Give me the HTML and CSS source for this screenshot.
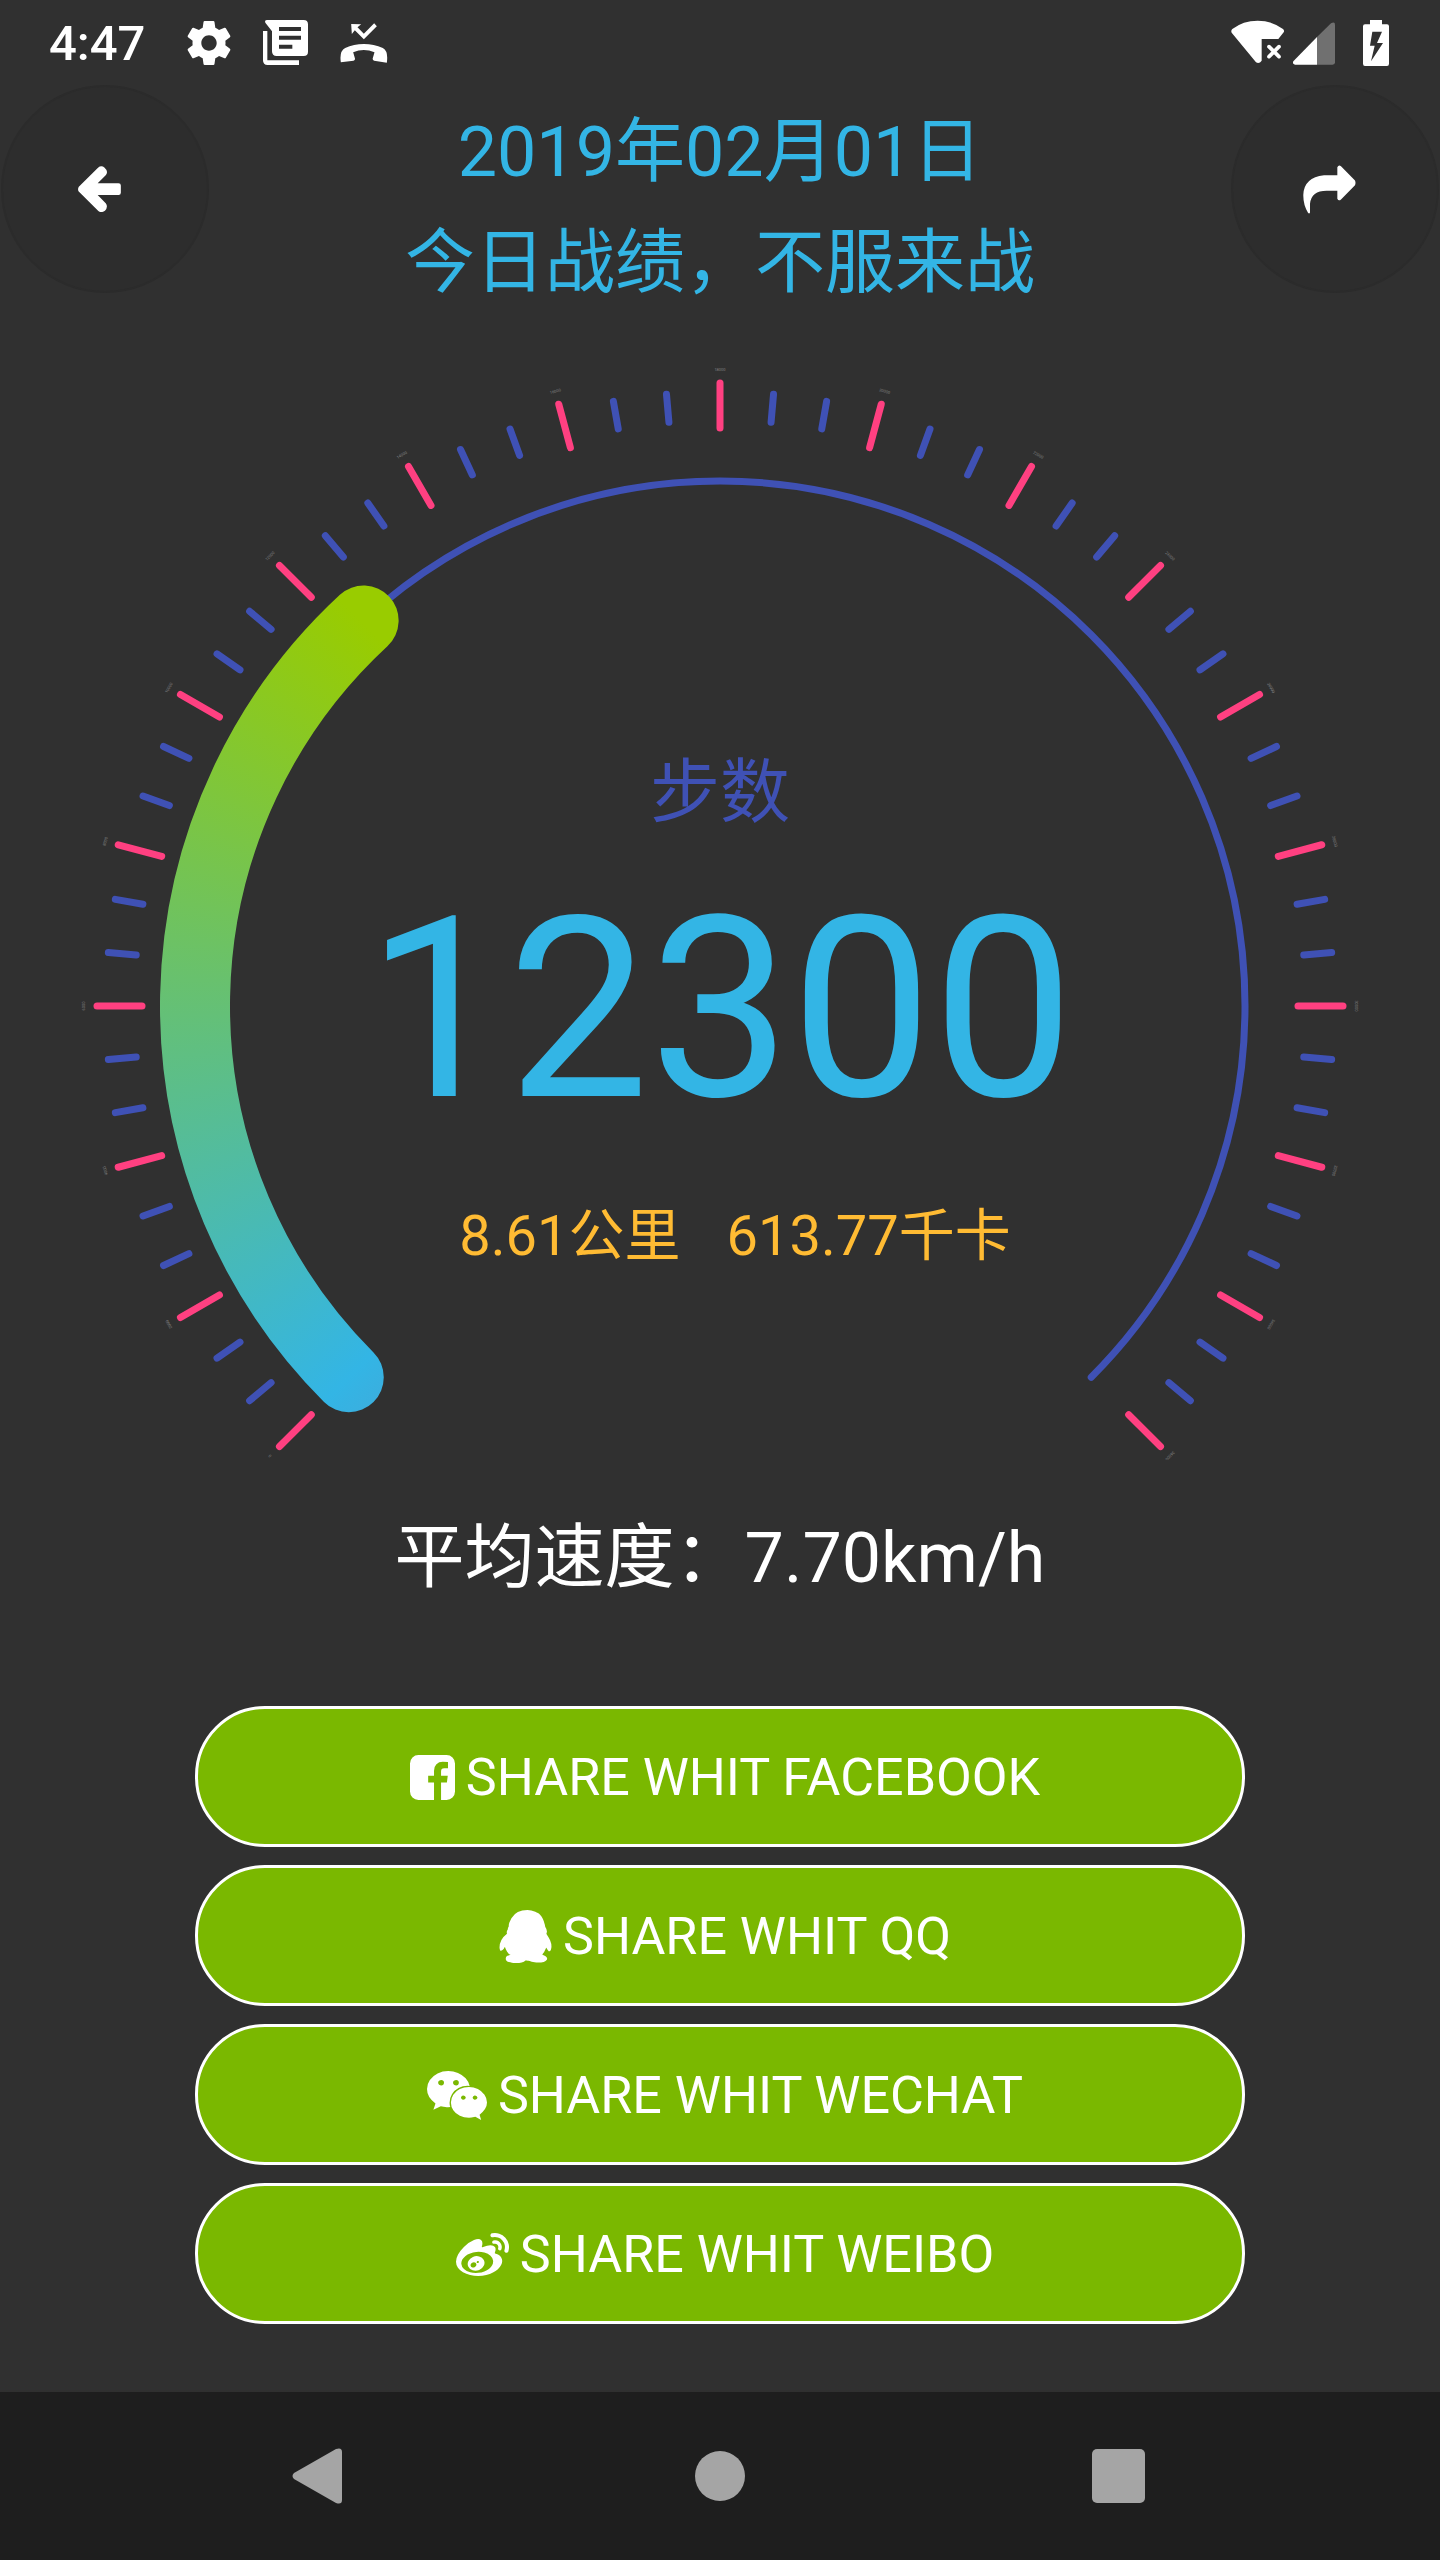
FILE: index.html
```html
<!DOCTYPE html>
<html lang="zh-CN">
<head>
<meta charset="utf-8">
<meta name="viewport" content="width=device-width, initial-scale=1">
<title>今日战绩</title>
<link rel="stylesheet" href="styles.css">
</head>
<body>
<div class="screen">
  <div class="status-bar">
    <div class="status-group status-left">
      <span class="clock">4:47</span>
      <svg class="icon-settings" viewBox="2 2 20 20" width="44" height="44"><path d="M19.43 12.98c.04-.32.07-.64.07-.98s-.03-.66-.07-.98l2.11-1.65c.19-.15.24-.42.12-.64l-2-3.46c-.12-.22-.39-.3-.61-.22l-2.49 1c-.52-.4-1.08-.73-1.69-.98l-.38-2.65C14.46 2.18 14.25 2 14 2h-4c-.25 0-.46.18-.49.42l-.38 2.65c-.61.25-1.17.59-1.69.98l-2.49-1c-.23-.09-.49 0-.61.22l-2 3.46c-.13.22-.07.49.12.64l2.11 1.65c-.04.32-.07.65-.07.98s.03.66.07.98l-2.11 1.65c-.19.15-.24.42-.12.64l2 3.46c.12.22.39.3.61.22l2.49-1c.52.4 1.08.73 1.69.98l.38 2.65c.03.24.24.42.49.42h4c.25 0 .46-.18.49-.42l.38-2.65c.61-.25 1.17-.59 1.69-.98l2.49 1c.23.09.49 0 .61-.22l2-3.46c.12-.22.07-.49-.12-.64l-2.11-1.65zM12 15.5c-1.93 0-3.5-1.57-3.5-3.5s1.57-3.5 3.5-3.5 3.5 1.57 3.5 3.5-1.57 3.5-3.5 3.5z"/></svg>
      <svg viewBox="792 60 135 135" width="45" height="45"><path fill-rule="evenodd" d="M804 60H914Q927 60 927 73V155Q927 168 914 168H833Q819 168 819 154V94L799 68Q796 60 804 60ZM840 81V93H906V81ZM840 107V119H906V107ZM840 134V146H880V134Z"/><path d="M792 93H805V181H900V195H806Q792 195 792 181Z"/></svg>
      <svg viewBox="1019 57 143 138" width="48" height="46"><path d="M1052 69L1082 70L1071 79L1090 98L1121 67L1129 76L1090 115L1063 88L1054 99Z"/><path d="M1021 184Q1016 150 1034 141Q1060 129 1090 129Q1120 129 1147 141Q1164 150 1159 185L1121 179Q1115 178 1117 171L1122 154Q1106 147 1090 147Q1074 147 1058 154L1063 171Q1065 178 1059 179Z"/></svg>
    </div>
    <div class="status-group status-right">
      <svg viewBox="216 58 162 138" width="54" height="46"><path d="M218 96Q215 90 220 85Q252 60 296 60Q338 60 372 85Q377 90 374 95L358 115H308V180Q301 190 291 185Z"/><path d="M330 138L360 168M360 138L330 168" fill="none" stroke="#fff" stroke-width="11" stroke-linecap="round"/></svg>
      <svg class="icon-signal" viewBox="402 58 126 138" width="42" height="46"><path d="M474 109L516 68Q528 62 528 72V185Q528 192 521 192H474Z" fill="#707070"/><path d="M474 109V192H408Q399 190 403 182Z"/></svg>
      <svg viewBox="609 57 78 138" width="26" height="46"><path fill-rule="evenodd" d="M630 57H666V70H681Q687 70 687 76V188Q687 195 681 195H615Q609 195 609 188V76Q609 70 615 70H630ZM637 92L630 134H644L633 181L669 126H651L666 92Z"/></svg>
    </div>
  </div>

  <header class="header">
    <button class="round-button" type="button" aria-label="返回">
      <svg viewBox="234 500 129 139" width="43" height="46"><path d="M235 576Q232 569 236 563L294 505Q304 496 314 505Q326 516 318 527L293 552H356Q363 552 363 559V581Q363 588 356 588H293L318 613Q325 625 315 635Q305 643 295 636Z"/></svg>
    </button>
    <h1 class="title">2019年02月01日<br>今日战绩，不服来战</h1>
    <button class="round-button" type="button" aria-label="分享">
      <svg viewBox="425 488 159 146" width="53" height="49"><path d="M528 518V494Q532 486 539 491L581 534Q584 541 581 548L539 591Q532 597 528 589V565H496Q450 565 446 604V630Q444 635 440 631Q425 605 426 576Q428 525 488 518Z"/></svg>
    </button>
  </header>

  <main class="content">
    <section class="gauge">
      <svg class="dial" viewBox="0 0 1440 1141" aria-hidden="true">
        <defs>
          <mask id="progress-mask" maskUnits="userSpaceOnUse" x="0" y="0" width="1440" height="1141">
            <path id="progress-arc" fill="none" stroke="#fff" stroke-width="70" stroke-linecap="round"/>
          </mask>
        </defs>
        <path id="track" fill="none" stroke="#3f51b5" stroke-width="7" stroke-linecap="round"/>
        <g id="ticks"></g>
        <g mask="url(#progress-mask)">
          <foreignObject x="120" y="87" width="1200" height="1200"><div class="progress-fill"></div></foreignObject>
        </g>
      </svg>
      <div class="readout">
        <p class="steps-label">步数</p>
        <p class="steps-value">12300</p>
        <p class="totals"><span>8.61公里</span><span>613.77千卡</span></p>
      </div>
    </section>

    <p class="speed">平均速度：7.70km/h</p>

    <div class="share-list">
      <button class="share-button" type="button">
        <svg viewBox="128 0 1536 1792" width="45" height="53"><path d="M1376 128q119 0 203.5 84.5t84.5 203.5v960q0 119-84.5 203.5t-203.5 84.5h-188v-595h199l30-232h-229v-148q0-56 23.5-84t91.5-28l122-1v-207q-63-9-178-9-136 0-217.5 80t-81.5 226v171h-200v232h200v595h-532q-119 0-203.5-84.5t-84.5-203.5v-960q0-119 84.5-203.5t203.5-84.5h960z"/></svg>
        <span>SHARE WHIT FACEBOOK</span>
      </button>
      <button class="share-button" type="button">
        <svg viewBox="0 0 1792 1792" width="53" height="53"><path d="M270 806q-8-19-8-52 0-20 11-49t24-45q-1-22 7.5-53t22.5-43q0-139 92.5-288.5t217.5-209.5q139-66 324-66 133 0 266 55 49 21 90 48t71 56 55 68 42 74 32.5 84.5 25.5 89.5 22 98l1 5q55 83 55 150 0 14-9 40t-9 38q0 1 1.500 3.500t3.500 5 2 3.500q77 114 120.500 214.500t43.500 208.500q0 43-19.500 100t-55.500 57q-9 0-19.500-7.500t-19-17.500-19-26-16-26.500-13.500-26-9-17.500q-1-1-3-1l-5 4q-59 154-132 223 20 20 61.500 38.500t69 41.500 35.500 65q-2 4-4 16t-7 18q-64 97-302 97-53 0-110.500-9t-98-20-104.500-30q-15-5-23-7-14-4-46-4.500t-40-1.500q-41 45-127.500 65t-168.500 20q-35 0-69-1.500t-93-9-101-20.500-74.500-40-32.500-64q0-40 10-59.500t41-48.500q11-2 40.500-13t49.500-12q4 0 14-2 2-2 2-4l-2-3q-48-11-108-105.500t-73-156.500l-5-3q-4 0-12 20-18 41-54.500 74.500t-77.500 37.500h-1q-4 0-6-4.500t-5-5.500q-23-54-23-100 0-275 252-466z"/></svg>
        <span>SHARE WHIT QQ</span>
      </button>
      <button class="share-button" type="button">
        <svg viewBox="0 0 2048 1792" width="60" height="53"><path d="M580 461q0-41-25-66t-66-25q-43 0-76 25.500t-33 65.500q0 39 33 64.500t76 25.500q41 0 66-24.500t25-65.500zm743 507q0-28-25.500-50t-65.500-22q-27 0-49.500 22.500t-22.500 49.500q0 28 22.500 50.500t49.500 22.500q40 0 65.500-22t25.500-51zm-236-507q0-41-24.500-66t-65.500-25q-43 0-76 25.500t-33 65.500q0 39 33 64.500t76 25.500q41 0 65.500-24.500t24.500-65.500zm635 507q0-28-26-50t-65-22q-27 0-49.500 22.500t-22.500 49.500q0 28 22.500 50.500t49.500 22.500q39 0 65-22t26-51zm-266-397q-31-4-70-4-169 0-311 77t-223.500 208.500-81.500 287.500q0 78 23 152-35 3-68 3-26 0-50-1.500t-55-6.500-44.500-7-54.500-10.500-50-10.500l-253 127 72-218q-290-203-290-490 0-169 97.500-311t264-223.500 363.500-81.500q176 0 332.500 66t262 182.500 136.500 260.500zm592 561q0 117-68.500 223.500t-185.500 193.500l55 181-199-109q-150 37-218 37-169 0-311-70.500t-223.500-191.500-81.500-264 81.500-264 223.500-191.500 311-70.500q161 0 303 70.500t227.500 192 85.500 263.500z"/></svg>
        <span>SHARE WHIT WECHAT</span>
      </button>
      <button class="share-button" type="button">
        <svg viewBox="0 0 1792 1792" width="53" height="53"><path d="M675 1284q21-34 11-69t-45-50q-34-14-73-1t-60 46q-22 34-13 68.500t43 50.500 74.500 2.500 62.500-47.500zm94-121q8-13 3.500-26.500t-17.500-18.500q-14-5-28.500.5t-21.500 18.500q-17 31 13 45 14 5 29-.5t22-18.500zm174 107q-45 102-158 150t-224 12q-107-34-147.500-126.500t6.500-187.500q47-93 151.500-139t210.500-19q111 29 158.500 119.500t2.500 190.500zm312-160q-9-96-89-170t-208.500-109-274.500-21q-223 23-369.500 141.500t-132.500 264.500q9 96 89 170t208.500 109 274.500 21q223-23 369.500-141.500t132.500-264.500zm308 4q0 68-37 139.500t-109 137-168.500 117.500-226 83-270.500 31-275-33.500-240.500-93-171.500-151-65-199.500q0-115 69.500-245t197.500-258q169-169 341.500-236t246.500 7q65 64 20 209-4 14-1 20t10 7 14.500-.5 13.500-3.500l6-2q139-59 246-59t153 61q45 63 0 178-2 13-4.500 20t4.500 12.500 12 7 17 6.500q57 18 103 47t80 81.500 34 116.500zm-74-624q42 47 54.500 108.500t-6.500 117.500q-8 23-29.500 34t-44.500 4q-23-8-34-29.500t-4-44.500q20-63-24-111t-107-35q-24 5-45-8t-25-37q-5-24 8-44.500t37-25.500q60-13 119 5.500t101 65.500zm181-163q87 96 112.500 222.500t-13.500 241.500q-9 27-34 40t-52 4-40-34-5-52q28-82 10-172t-80-158q-62-69-148-95.500t-173-8.500q-28 6-52-9.500t-30-43.500 9.500-51.500 43.500-29.500q123-26 244 11.500t208 134.500z"/></svg>
        <span>SHARE WHIT WEIBO</span>
      </button>
    </div>
  </main>

  <nav class="nav-bar" aria-label="系统导航">
    <button class="nav-button" type="button" aria-label="返回"><svg viewBox="0 0 56 58" width="56" height="58"><path d="M2 32Q-1 29 2 26L44 2Q50 0 50 5V53Q50 58 44 56Z"/></svg></button>
    <button class="nav-button" type="button" aria-label="主屏幕"><svg viewBox="0 0 50 50" width="50" height="50"><circle cx="25" cy="25" r="25"/></svg></button>
    <button class="nav-button" type="button" aria-label="最近任务"><svg viewBox="0 0 56 54" width="56" height="54"><rect width="53" height="54" rx="5"/></svg></button>
  </nav>
</div>
<script src="gauge.js"></script>
</body>
</html>
```

FILE: styles.css
```css
* {
  box-sizing: border-box;
}

body {
  margin: 0;
  background: #303030;
  color: #fff;
  font-family: Roboto, "Noto Sans CJK SC", sans-serif;
}

h1,
p {
  margin: 0;
  font-weight: 400;
}

button {
  padding: 0;
  border: 0;
  background: none;
  color: inherit;
  font: inherit;
  cursor: pointer;
}

svg {
  display: block;
  fill: currentColor;
}

.screen {
  display: flex;
  flex-direction: column;
  min-height: 100vh;
}

/* Status bar */

.status-bar {
  display: flex;
  justify-content: space-between;
  align-items: center;
  height: 85px;
  padding: 0 51px 0 49px;
}

.status-group {
  display: flex;
  align-items: center;
}

.status-left {
  gap: 32px;
}

.status-right {
  gap: 8px;
}

.clock {
  margin-right: 10px;
  padding-top: 2px;
  font-size: 49px;
  line-height: 60px;
  font-weight: 500;
}

.icon-signal {
  margin-right: 20px;
}

/* Header */

.header {
  display: grid;
  grid-template-columns: 208px 1fr 208px;
  padding: 0 1px;
}

.round-button {
  display: flex;
  align-items: center;
  justify-content: center;
  height: 208px;
  padding-right: 12px;
  border: 2px solid #2b2b2b;
  border-radius: 50%;
  background: #2d2d2d;
}

.title {
  padding-top: 12px;
  color: #33b5e5;
  font-size: 70px;
  line-height: 111px;
  text-align: center;
}

/* Gauge */

.content {
  flex: 1;
}

.gauge {
  display: grid;
  max-width: 1440px;
  margin: 0 auto;
}

.dial,
.readout {
  grid-area: 1 / 1;
}

.dial {
  width: 100%;
}

.progress-fill {
  height: 100%;
  background: conic-gradient(from 225deg, #33b5e5 0deg, #99cc00 92deg, #99cc00 180deg, #5697c7 340deg, #33b5e5 360deg);
}

.tick-label {
  fill: #808080;
  font-size: 4px;
  text-anchor: middle;
}

.readout {
  display: flex;
  flex-direction: column;
  align-items: center;
  padding-top: 433px;
}

.steps-label {
  color: #3f51b5;
  font-size: 70px;
  line-height: 82px;
}

.steps-value {
  margin: 26px 0 43px;
  color: #33b5e5;
  font-size: 252px;
  line-height: 300px;
}

.totals {
  display: flex;
  gap: 46px;
  padding-left: 30px;
  color: #ffbb33;
  font-size: 56px;
  line-height: 66px;
}

.speed {
  padding-top: 57px;
  font-size: 70px;
  line-height: 82px;
  text-align: center;
}

/* Share buttons */

.share-list {
  display: flex;
  flex-direction: column;
  gap: 18px;
  max-width: 1050px;
  margin: 107px auto 68px;
}

.share-button {
  display: flex;
  align-items: center;
  justify-content: center;
  gap: 11px;
  height: 141px;
  padding: 2px 0 0 10px;
  border: 3px solid #fff;
  border-radius: 70px;
  background: #7ab800;
  font-size: 52px;
  line-height: 62px;
}

/* System navigation */

.nav-bar {
  display: grid;
  grid-template-columns: repeat(3, 400px);
  justify-content: center;
  height: 168px;
  background: #1e1e1e;
  color: #a5a5a5;
}

.nav-button {
  display: flex;
  align-items: center;
  justify-content: center;
}
```

FILE: gauge.js
```js
const SVG_NS = "http://www.w3.org/2000/svg";
const CENTER = { x: 720, y: 687 };
const RADIUS = 525;
const START = -135;
const SWEEP = 270;
const MAX_STEPS = 36000;
const STEPS = 12300;

function point(angle, r) {
  const a = (angle - 90) * Math.PI / 180;
  return [CENTER.x + r * Math.cos(a), CENTER.y + r * Math.sin(a)];
}

function arc(from, to) {
  const large = to - from > 180 ? 1 : 0;
  return `M${point(from, RADIUS)}A${RADIUS} ${RADIUS} 0 ${large} 1 ${point(to, RADIUS)}`;
}

document.getElementById("track").setAttribute("d", arc(START, START + SWEEP));
document.getElementById("progress-arc").setAttribute("d", arc(START, START + SWEEP * STEPS / MAX_STEPS));

// One tick every 5 degrees; every third is a labelled major tick.
const ticks = document.getElementById("ticks");
for (let i = 0; i <= 54; i++) {
  const major = i % 3 === 0;
  const rotate = `rotate(${START + i * 5} ${CENTER.x} ${CENTER.y})`;
  const line = document.createElementNS(SVG_NS, "line");
  line.setAttribute("x1", CENTER.x);
  line.setAttribute("x2", CENTER.x);
  line.setAttribute("y1", CENTER.y - (major ? 623 : 614));
  line.setAttribute("y2", CENTER.y - (major ? 578 : 586));
  line.setAttribute("stroke", major ? "#ff4081" : "#3f51b5");
  line.setAttribute("stroke-width", 7);
  line.setAttribute("stroke-linecap", "round");
  line.setAttribute("transform", rotate);
  ticks.append(line);
  if (major) {
    const label = document.createElementNS(SVG_NS, "text");
    label.setAttribute("class", "tick-label");
    label.setAttribute("x", CENTER.x);
    label.setAttribute("y", CENTER.y - 635);
    label.setAttribute("transform", rotate);
    label.textContent = MAX_STEPS * i / 54;
    ticks.append(label);
  }
}
```
